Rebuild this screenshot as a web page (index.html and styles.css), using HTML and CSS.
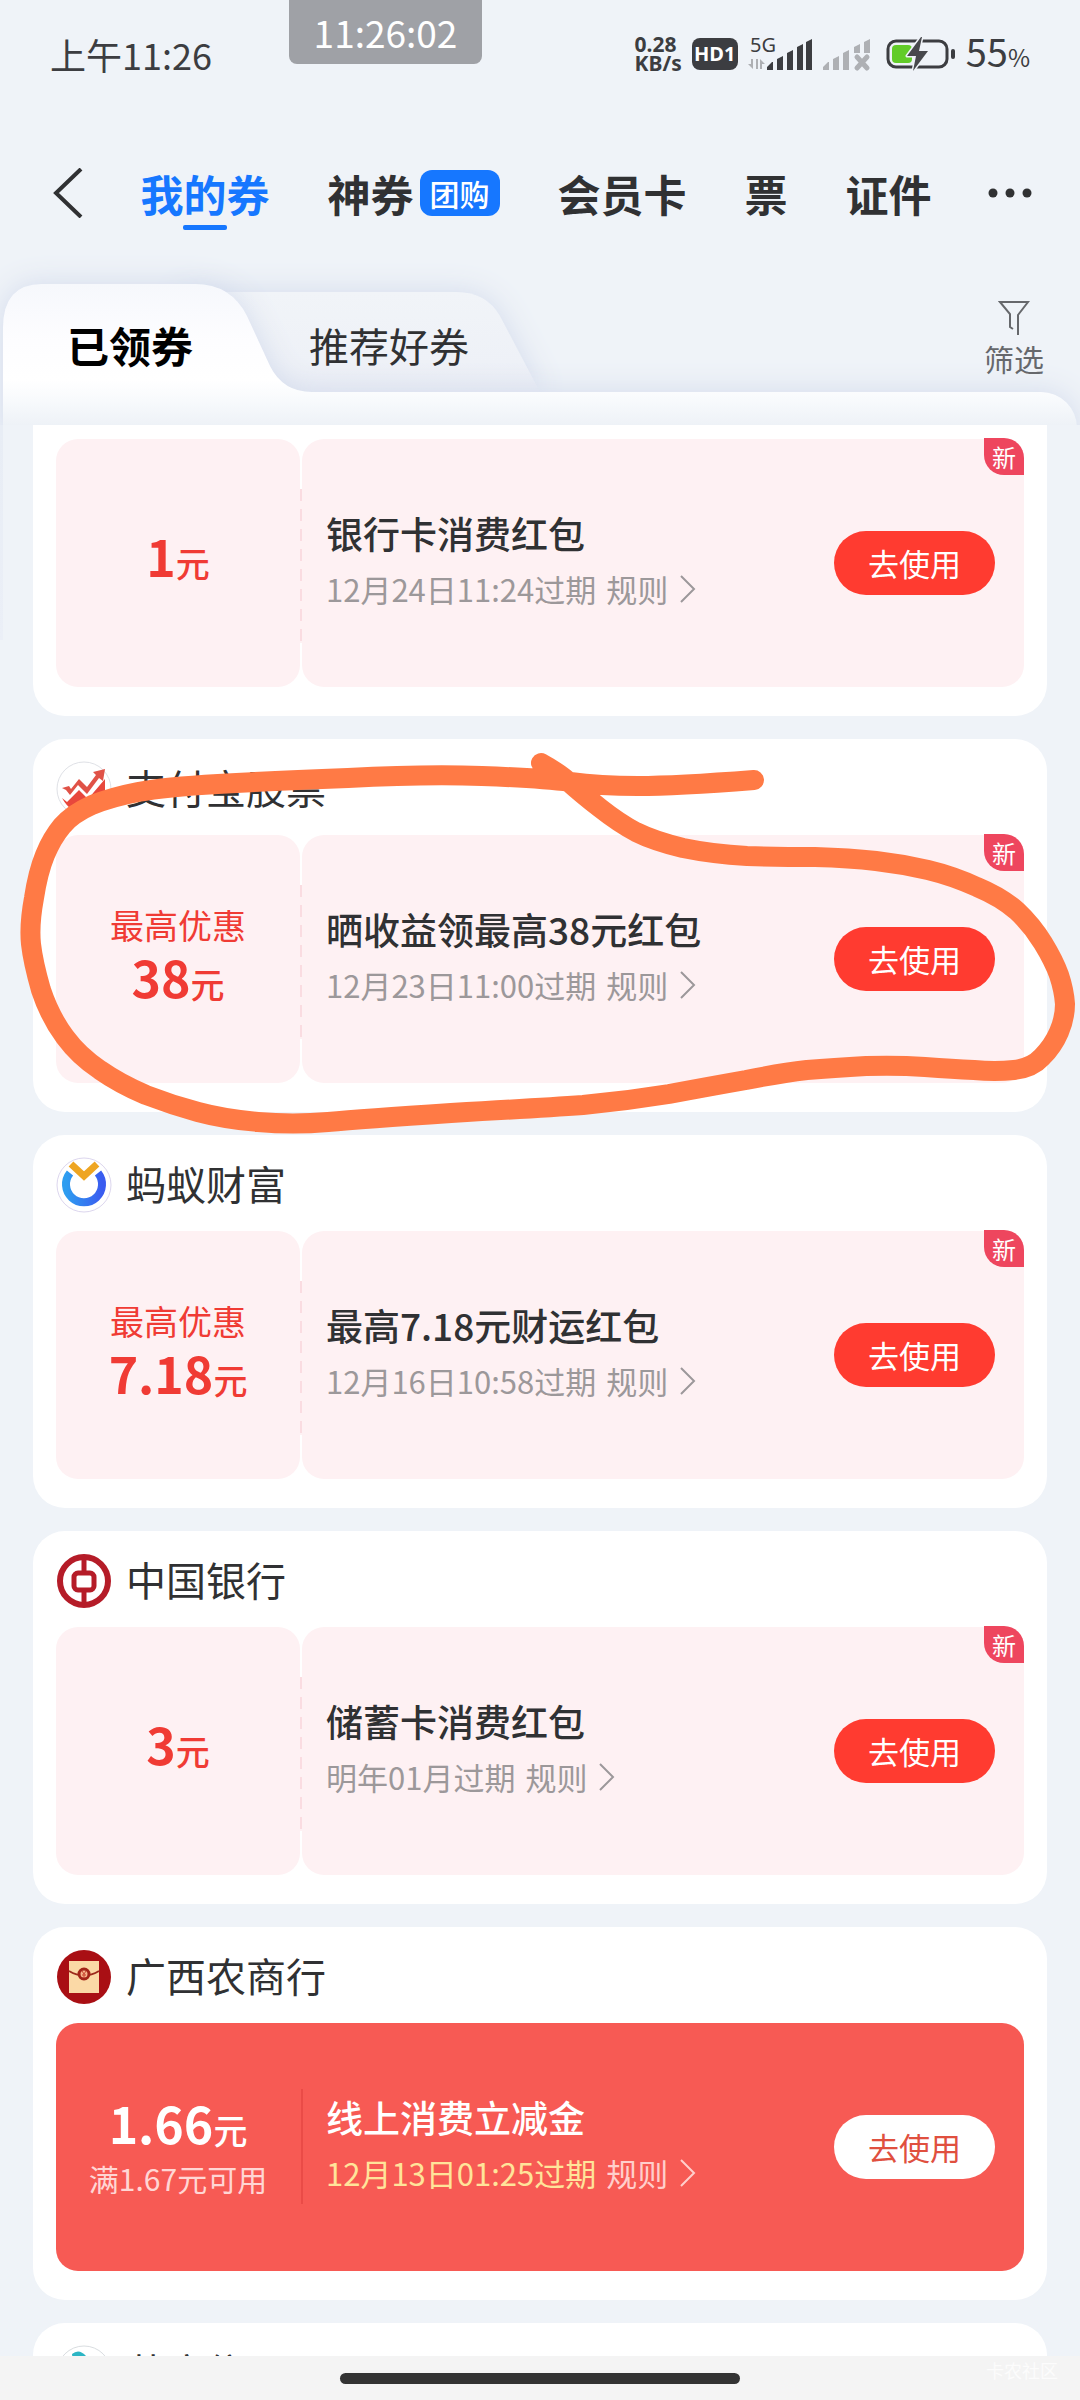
FILE: index.html
```html
<!DOCTYPE html>
<html lang="zh-CN">
<head>
<meta charset="utf-8">
<meta name="viewport" content="width=device-width, initial-scale=1">
<title>我的券</title>
<link rel="stylesheet" href="styles.css">
</head>
<body>
<div class="app">
  <div class="status">
    <span class="status-time">上午11:26</span>
    <span class="status-clock">11:26:02</span>
    <div class="status-icons">
      <div class="net-speed"><span>0.28</span><span>KB/s</span></div>
      <span class="hd-badge">HD1</span>
      <svg class="signal-icon" width="64" height="34" viewBox="0 0 64 34" aria-hidden="true">
        <text x="2" y="15" class="signal-text">5G</text>
        <g fill="#aeb0b4"><path d="M5 22v10l-5-5h3v-5zM8 22h2v10H8zM12 32V22l5 5h-3v5z"/></g>
        <g fill="#3c3d41"><path d="M19 33v-3l5-5h1v8zM29 33V22l6-3v14zM39 33V16l6-3v20zM49 33V10l6-3v26zM58 33V5l6-3v31z"/></g>
      </svg>
      <svg class="signal-icon" width="50" height="34" viewBox="0 0 50 34" aria-hidden="true">
        <path fill="#aeb0b4" d="M1 33v-3l5-5h1v8zM11 33V22l6-3v14zM21 33V16l6-3v20zM32 16v-6l6-3v9zM42 16V5l6-3v14z"/>
        <path stroke="#aeb0b4" stroke-width="5" stroke-linecap="round" d="M35 20l10 11M45 20L35 31"/>
      </svg>
      <svg class="battery-icon" width="70" height="34" viewBox="0 0 70 34" aria-hidden="true">
        <rect x="2" y="4" width="59" height="26" rx="8" fill="none" stroke="#3c3d41" stroke-width="3"/>
        <rect x="6" y="8" width="20" height="18" rx="4" fill="#62cc29"/>
        <rect x="65" y="12" width="4" height="10" rx="2" fill="#3c3d41"/>
        <path d="M35 0L21 19h9l-3 15L42 14h-9l3-14z" fill="#47484c" stroke="#eff3f8" stroke-width="3" stroke-linejoin="round" paint-order="stroke"/>
      </svg>
      <span class="battery-level">55<small>%</small></span>
    </div>
  </div>

  <header class="nav">
    <button class="icon-button" aria-label="返回">
      <svg width="32" height="50" viewBox="0 0 32 50" aria-hidden="true"><path d="M29 1L4 25l25 24" fill="none" stroke="#303133" stroke-width="4"/></svg>
    </button>
    <nav class="nav-tabs">
      <a class="nav-tab nav-tab-active" href="#coupons">我的券</a>
      <a class="nav-tab" href="#shenquan">神券<span class="nav-tag">团购</span></a>
      <a class="nav-tab" href="#cards">会员卡</a>
      <a class="nav-tab" href="#tickets">票</a>
      <a class="nav-tab" href="#ids">证件</a>
    </nav>
    <button class="icon-button" aria-label="更多">
      <svg width="44" height="10" viewBox="0 0 44 10" aria-hidden="true"><g fill="#303133"><circle cx="5" cy="5" r="4.5"/><circle cx="22" cy="5" r="4.5"/><circle cx="39" cy="5" r="4.5"/></g></svg>
    </button>
  </header>

  <div class="subtabs">
    <svg class="subtabs-shape" aria-hidden="true">
      <defs>
        <linearGradient id="front" gradientUnits="userSpaceOnUse" x1="0" y1="6" x2="0" y2="147">
          <stop offset="0" stop-color="#f6f8fc"/><stop offset=".4" stop-color="#fdfdff"/><stop offset=".68" stop-color="#fff"/><stop offset=".8" stop-color="#f9fbfd"/><stop offset="1" stop-color="#eef2f7"/>
        </linearGradient>
        <linearGradient id="back" gradientUnits="userSpaceOnUse" x1="0" y1="14" x2="0" y2="114">
          <stop offset="0" stop-color="#f1f4f8"/><stop offset=".7" stop-color="#eef1f7"/><stop offset="1" stop-color="#eaedf5"/>
        </linearGradient>
      </defs>
      <path class="shape-back" fill="url(#back)" d="M180 14H457Q486 14 500 38L541 116H180Z"/>
      <g class="shape-front" fill="url(#front)">
        <rect class="shape-panel" x="280" y="114" height="120" rx="36"/>
        <path d="M3 160V50Q3 6 42 6H195Q231 6 247 38L270 88Q283 114 312 114H400V160Z"/>
      </g>
    </svg>
    <a class="subtab subtab-active" href="#received">已领券</a>
    <a class="subtab" href="#recommended">推荐好券</a>
    <button class="filter">
      <svg width="32" height="36" viewBox="0 0 32 36" aria-hidden="true"><path d="M20 35V15L30 2H2l10 12v13l3 2" fill="none" stroke="#66686c" stroke-width="2"/></svg>
      <span>筛选</span>
    </button>
  </div>

  <main class="list" id="received">
    <section class="card card-scrolled">
      <article class="coupon">
        <div class="coupon-value"><p class="amount">1<small>元</small></p></div>
        <div class="coupon-body">
          <div class="coupon-text">
            <h3>银行卡消费红包</h3>
            <p><span class="expiry">12月24日11:24过期</span><a class="rules" href="#rules">规则<svg class="chevron" viewBox="0 0 16 28" aria-hidden="true"><path d="M1 1l13 13L1 27"/></svg></a></p>
          </div>
          <button class="use">去使用</button>
        </div>
        <span class="new">新</span>
      </article>
    </section>

    <section class="card">
      <h2 class="shop">
        <svg class="logo" viewBox="0 0 56 56" aria-hidden="true"><circle cx="28" cy="28" r="27" fill="#fff" stroke="#dfe1e6"/><path d="M6 27l7-2 2 3 8-10 8 8 9-12-3-3 12-3-2 12-4-3-12 16-9-9-8 10-4-5z" fill="#e05247"/><path d="M6 37l5 4 12-12 9 9 17-20v19q-5 13-20 15-14 1-23-15z" fill="#e8473c"/></svg>
        支付宝股票</h2>
      <article class="coupon">
        <div class="coupon-value"><p class="value-label">最高优惠</p><p class="amount">38<small>元</small></p></div>
        <div class="coupon-body">
          <div class="coupon-text">
            <h3>晒收益领最高38元红包</h3>
            <p><span class="expiry">12月23日11:00过期</span><a class="rules" href="#rules">规则<svg class="chevron" viewBox="0 0 16 28" aria-hidden="true"><path d="M1 1l13 13L1 27"/></svg></a></p>
          </div>
          <button class="use">去使用</button>
        </div>
        <span class="new">新</span>
      </article>
    </section>

    <section class="card">
      <h2 class="shop">
        <svg class="logo" viewBox="0 0 56 56" aria-hidden="true">
          <defs><linearGradient id="ring" x1="0" y1="0" x2="1" y2="0"><stop offset="0" stop-color="#2e9df0"/><stop offset="1" stop-color="#3a5cf0"/></linearGradient></defs>
          <circle cx="28" cy="28" r="27" fill="#fff" stroke="#dcd6ee"/><path d="M14 16A18 18 0 1 0 42 16" fill="none" stroke="url(#ring)" stroke-width="8"/><path d="M15 7l13 12L41 7" fill="none" stroke="#eea522" stroke-width="7"/></svg>
        蚂蚁财富</h2>
      <article class="coupon">
        <div class="coupon-value"><p class="value-label">最高优惠</p><p class="amount">7.18<small>元</small></p></div>
        <div class="coupon-body">
          <div class="coupon-text">
            <h3>最高7.18元财运红包</h3>
            <p><span class="expiry">12月16日10:58过期</span><a class="rules" href="#rules">规则<svg class="chevron" viewBox="0 0 16 28" aria-hidden="true"><path d="M1 1l13 13L1 27"/></svg></a></p>
          </div>
          <button class="use">去使用</button>
        </div>
        <span class="new">新</span>
      </article>
    </section>

    <section class="card">
      <h2 class="shop">
        <svg class="logo" viewBox="0 0 56 56" aria-hidden="true"><g fill="none" stroke="#b51c28"><circle cx="28" cy="28" r="24" fill="#fff" stroke-width="6"/><rect x="18" y="20" width="20" height="17" rx="4" stroke-width="5"/><path d="M28 4v16M28 37v16" stroke-width="5"/></g></svg>
        中国银行</h2>
      <article class="coupon">
        <div class="coupon-value"><p class="amount">3<small>元</small></p></div>
        <div class="coupon-body">
          <div class="coupon-text">
            <h3>储蓄卡消费红包</h3>
            <p><span class="expiry">明年01月过期</span><a class="rules" href="#rules">规则<svg class="chevron" viewBox="0 0 16 28" aria-hidden="true"><path d="M1 1l13 13L1 27"/></svg></a></p>
          </div>
          <button class="use">去使用</button>
        </div>
        <span class="new">新</span>
      </article>
    </section>

    <section class="card">
      <h2 class="shop">
        <svg class="logo" viewBox="0 0 56 56" aria-hidden="true"><circle cx="28" cy="28" r="27" fill="#a90f14"/><path d="M13 12h30v32H13z" fill="#fbd9a6"/><path d="M13 22q15 9 30 0" fill="none" stroke="#9c2a1c" stroke-width="2"/><circle cx="28" cy="25" r="5" fill="#f6b58c" stroke="#a32419" stroke-width="3"/><path d="M26 22l2 3 2-3M28 25v4M26 26h4" fill="none" stroke="#c8432f"/></svg>
        广西农商行</h2>
      <article class="coupon coupon-solid">
        <div class="coupon-value"><p class="amount">1.66<small>元</small></p><p class="value-note">满1.67元可用</p></div>
        <div class="coupon-body">
          <div class="coupon-text">
            <h3>线上消费立减金</h3>
            <p><span class="expiry">12月13日01:25过期</span><a class="rules" href="#rules">规则<svg class="chevron" viewBox="0 0 16 28" aria-hidden="true"><path d="M1 1l13 13L1 27"/></svg></a></p>
          </div>
          <button class="use">去使用</button>
        </div>
      </article>
    </section>

    <section class="card">
      <h2 class="shop">
        <svg class="logo" viewBox="0 0 56 56" aria-hidden="true"><circle cx="28" cy="28" r="27" fill="#fff" stroke="#d9dde0"/><path d="M16 9q7-6 14 2l14 18-8 12-18-16z" fill="#2cb5c4"/></svg>
        芝麻信用</h2>
    </section>
  </main>

  <footer class="home-bar"><span class="home-pill"></span><span class="watermark">卡农社区</span></footer>

  <svg class="doodle" viewBox="0 730 1080 420" aria-hidden="true">
    <path d="M754 780Q676 786 638 786Q600 786 570 782Q540 778 482 776Q425 774 348 778Q270 781 218 784Q165 787 138 792Q112 797 92 805Q72 814 62 826Q52 838 45 855Q38 872 34 898Q29 925 31 944Q33 962 41 990Q50 1017 65 1037Q79 1056 100 1070Q120 1084 146 1095Q172 1105 198 1112Q224 1119 258 1122Q293 1125 328 1122Q362 1119 451 1113Q540 1108 583 1105Q626 1101 669 1094Q712 1086 746 1080Q781 1073 807 1070Q833 1068 866 1066Q898 1065 925 1067Q953 1069 974 1070Q995 1072 1014 1070Q1032 1068 1042 1057Q1053 1046 1059 1032Q1065 1018 1065 1004Q1064 990 1059 975Q1054 961 1043 943Q1032 925 1017 911Q1001 897 977 887Q953 876 928 870Q902 864 876 861Q850 858 815 857Q781 857 747 856Q712 854 683 848Q654 841 636 832Q619 823 600 808Q581 793 571 784Q561 774 541 763" fill="none" stroke="#ff7a45" stroke-width="20" stroke-linecap="round" stroke-linejoin="round"/>
  </svg>
</div>
</body>
</html>
```
FILE: styles.css
```css
* {
  box-sizing: border-box;
}

body {
  margin: 0;
  background: #eff3f8;
  color: #303133;
  font-family: "Noto Sans CJK SC", "Noto Sans", sans-serif;
}

h2, h3, p {
  margin: 0;
  font-weight: 400;
}

a {
  color: inherit;
  text-decoration: none;
}

button {
  padding: 0;
  border: 0;
  background: none;
  color: inherit;
  font: inherit;
}

svg {
  display: block;
}

.app {
  position: relative;
  display: flex;
  flex-direction: column;
  height: 100vh;
  overflow: hidden;
}

/* status bar */
.status {
  display: flex;
  align-items: center;
  justify-content: space-between;
  flex: none;
  height: 108px;
  padding: 0 50px;
  color: #3c3d41;
}

.status-time {
  font-size: 36px;
  line-height: 48px;
}

.status-clock {
  position: absolute;
  top: 0;
  left: 289px;
  width: 193px;
  border-radius: 0 0 8px 8px;
  background: #9fa1a6;
  color: #fff;
  font-size: 37px;
  line-height: 64px;
  text-align: center;
}

.status-icons {
  display: flex;
  align-items: center;
  gap: 10px;
}

.signal-icon {
  overflow: visible;
}

.net-speed {
  display: flex;
  flex-direction: column;
  font: 700 21px/19px "Noto Sans", sans-serif;
}

.hd-badge {
  width: 46px;
  border-radius: 8px;
  background: #3c3d41;
  color: #fff;
  font: 700 20px/32px "Noto Sans", sans-serif;
  text-align: center;
}

.signal-text {
  fill: #3c3d41;
  font: 20px "Noto Sans", sans-serif;
}

.battery-icon {
  margin-left: 4px;
}

.battery-level {
  font-size: 38px;
  line-height: 48px;
}

.battery-level small {
  font-size: 24px;
}

/* top navigation */
.nav {
  display: flex;
  align-items: center;
  justify-content: space-between;
  flex: none;
  height: 170px;
  padding: 0 48px 0 52px;
}

.nav-tabs {
  display: flex;
  gap: 58px;
}

.nav-tab {
  position: relative;
  display: flex;
  align-items: center;
  gap: 6px;
  font-size: 43px;
  font-weight: 700;
  line-height: 74px;
}

.nav-tab-active {
  color: #1677ff;
}

.nav-tab-active::after {
  content: "";
  position: absolute;
  bottom: 0;
  left: 50%;
  width: 44px;
  height: 5px;
  margin-left: -22px;
  border-radius: 2px;
  background: #1677ff;
}

.nav-tag {
  padding: 0 10px;
  border-radius: 12px;
  background: #1677ff;
  color: #fff;
  font-size: 30px;
  font-weight: 500;
  line-height: 46px;
}

/* folder tabs */
.subtabs {
  position: relative;
  display: flex;
  align-items: center;
  flex: none;
  height: 147px;
  padding: 0 36px 14px 67px;
}

.subtabs-shape {
  position: absolute;
  top: 0;
  left: 0;
  width: 100%;
  height: 100%;
  overflow: visible;
  clip-path: inset(-60px 0 0 0);
}

.shape-back,
.shape-front {
  filter: drop-shadow(0 0 14px #d3dbec);
}

.shape-panel {
  width: calc(100% - 283px);
}

.subtab {
  position: relative;
  margin-right: 116px;
  font-size: 40px;
  line-height: 60px;
}

.subtab-active {
  color: #000;
  font-size: 42px;
  font-weight: 700;
}

.filter {
  position: relative;
  display: flex;
  flex-direction: column;
  align-items: center;
  gap: 2px;
  margin-left: auto;
  padding-bottom: 12px;
  color: #66686c;
  font-size: 30px;
  line-height: 40px;
}

/* coupon list */
.list {
  display: flex;
  flex: 1;
  flex-direction: column;
  gap: 23px;
  min-height: 0;
  padding: 0 33px;
  overflow: hidden;
  background: linear-gradient(#e8edf5, #ebeff7) no-repeat 0 0 / 3px 215px;
}

.card {
  flex: none;
  padding: 0 23px 29px;
  border-radius: 32px;
  background: #fff;
}

.card-scrolled {
  padding-top: 14px;
  border-radius: 0 0 32px 32px;
}

.shop {
  display: flex;
  align-items: center;
  gap: 14px;
  height: 96px;
  font-size: 40px;
  line-height: 60px;
}

.logo {
  width: 56px;
  height: 56px;
  margin-top: 4px;
}

.coupon {
  position: relative;
  display: flex;
  gap: 2px;
  height: 248px;
}

.coupon::before {
  content: "";
  position: absolute;
  top: 50px;
  left: 244px;
  width: 2px;
  height: 154px;
  background: repeating-linear-gradient(#fadce1 0 12px, transparent 12px 20px), #fef1f3;
}

.coupon-value,
.coupon-body {
  display: flex;
  border-radius: 22px;
  background: #fef1f3;
}

.coupon-value {
  flex-direction: column;
  align-items: center;
  justify-content: center;
  width: 244px;
  padding-bottom: 8px;
  color: #f03b34;
}

.coupon-body {
  flex: 1;
  align-items: center;
  justify-content: space-between;
  padding: 0 29px 0 24px;
}

.value-label {
  padding-top: 8px;
  font-size: 34px;
  line-height: 42px;
}

.value-note {
  color: #ffd6d4;
  font-size: 30px;
  line-height: 36px;
}

.amount {
  font-size: 50px;
  font-weight: 700;
  line-height: 60px;
}

.amount small {
  font-size: 34px;
  font-weight: 500;
}

.coupon-text {
  padding-bottom: 4px;
}

.coupon-text h3 {
  font-size: 37px;
  font-weight: 500;
  line-height: 56px;
}

.coupon-text p {
  display: flex;
  gap: 10px;
  color: #9c989a;
  font-size: 31px;
  line-height: 56px;
}

.rules {
  display: flex;
  align-items: center;
  gap: 12px;
}

.chevron {
  width: 16px;
  height: 28px;
  fill: none;
  stroke: currentColor;
  stroke-width: 2;
}

.use {
  width: 161px;
  border-radius: 32px;
  background: #ff3b30;
  color: #fff;
  font-size: 31px;
  line-height: 64px;
}

.new {
  position: absolute;
  top: -1px;
  right: 0;
  width: 40px;
  border-radius: 0 20px 0 20px;
  background: #ee465e;
  color: #fff;
  font-size: 24px;
  line-height: 37px;
  text-align: center;
}

.coupon-solid {
  border-radius: 22px;
  background: #f75a54;
}

.coupon-solid::before {
  top: 66px;
  left: 245px;
  height: 115px;
  background: #ea4b47;
}

.coupon-solid .coupon-value,
.coupon-solid .coupon-body {
  background: none;
  color: #fff;
}

.coupon-solid .coupon-value {
  padding-bottom: 6px;
}

.coupon-solid .expiry {
  color: #ffe49a;
}

.coupon-solid .rules {
  color: #ffcfcc;
}

.coupon-solid .use {
  background: #fff;
  color: #e0503f;
}

/* gesture bar */
.home-bar {
  position: relative;
  display: flex;
  justify-content: center;
  flex: none;
  height: 44px;
  padding-top: 17px;
  background: #f4f4f4;
}

.home-pill {
  width: 37%;
  height: 11px;
  border-radius: 6px;
  background: #333;
}

.watermark {
  position: absolute;
  top: 4px;
  right: 22px;
  color: #fcfcfc;
  font-size: 18px;
  line-height: 20px;
}

/* hand-drawn marker over the list */
.doodle {
  position: absolute;
  top: 730px;
  left: 0;
  width: 100%;
  pointer-events: none;
}
```
